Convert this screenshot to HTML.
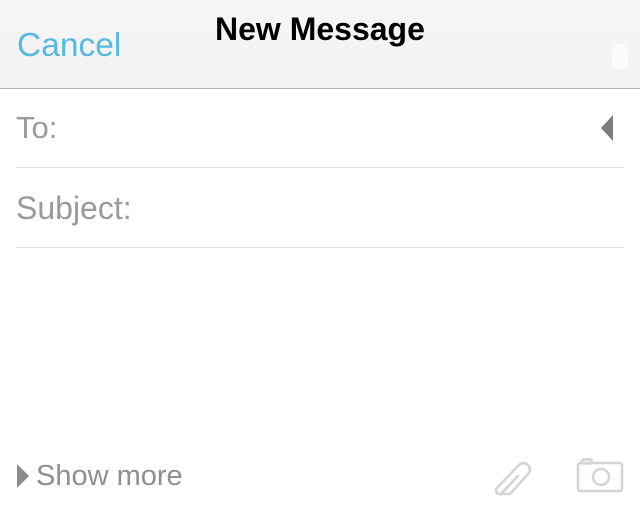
<!DOCTYPE html>
<html><head><style>
body{margin:0;width:640px;height:528px;background:#fff;font-family:"Liberation Sans",sans-serif;position:relative;overflow:hidden}
.hdr{position:absolute;left:0;top:0;width:640px;height:88px;background:linear-gradient(#f6f6f6,#f2f2f2);border-bottom:1px solid #b2b2b2}
.t{position:absolute;white-space:nowrap}
.line{position:absolute;left:16px;width:608px;height:1px;background:#e0e0e0}
</style></head><body>
<div class="hdr"></div>
<div class="t" style="left:17px;top:27px;font-size:33.5px;color:#56b9e0">Cancel</div>
<div class="t" style="left:215px;top:11px;font-size:32px;font-weight:bold;color:#000">New Message</div>
<div style="position:absolute;left:612px;top:44px;width:16px;height:26px;background:#fbfbfb;border-radius:6px"></div>
<div class="t" style="left:16px;top:110px;font-size:31px;color:#9a9a9a">To:</div>
<svg style="position:absolute;left:600px;top:115px" width="14" height="26"><polygon points="13,0 13,26 1,13" fill="#7d7d7d"/></svg>
<div class="line" style="top:167px"></div>
<div class="t" style="left:16px;top:190px;font-size:32px;color:#9a9a9a">Subject:</div>
<div class="line" style="top:247px"></div>
<svg style="position:absolute;left:16px;top:464px" width="14" height="24"><polygon points="1,0 13,12 1,24" fill="#8a8a8a"/></svg>
<div class="t" style="left:36px;top:460px;font-size:29px;color:#8f8f8f">Show more</div>
<svg style="position:absolute;left:488px;top:456px" width="48" height="42" fill="none" stroke="#d4d4d4" stroke-width="2.5" stroke-linecap="round">
<path d="M22 38 L40 18 a6 6 0 0 0 -9 -9 L8 33 a4 4 0 0 0 5 5 L30 20"/>
<path d="M22 38 L13 38"/>
</svg>
<svg style="position:absolute;left:576px;top:458px" width="50" height="36" fill="none" stroke="#d4d4d4" stroke-width="2.5">
<rect x="2" y="5" width="44" height="28" rx="2"/>
<rect x="6" y="1.5" width="10" height="4" rx="1.5"/>
<circle cx="25" cy="19" r="8"/>
</svg>
</body></html>
